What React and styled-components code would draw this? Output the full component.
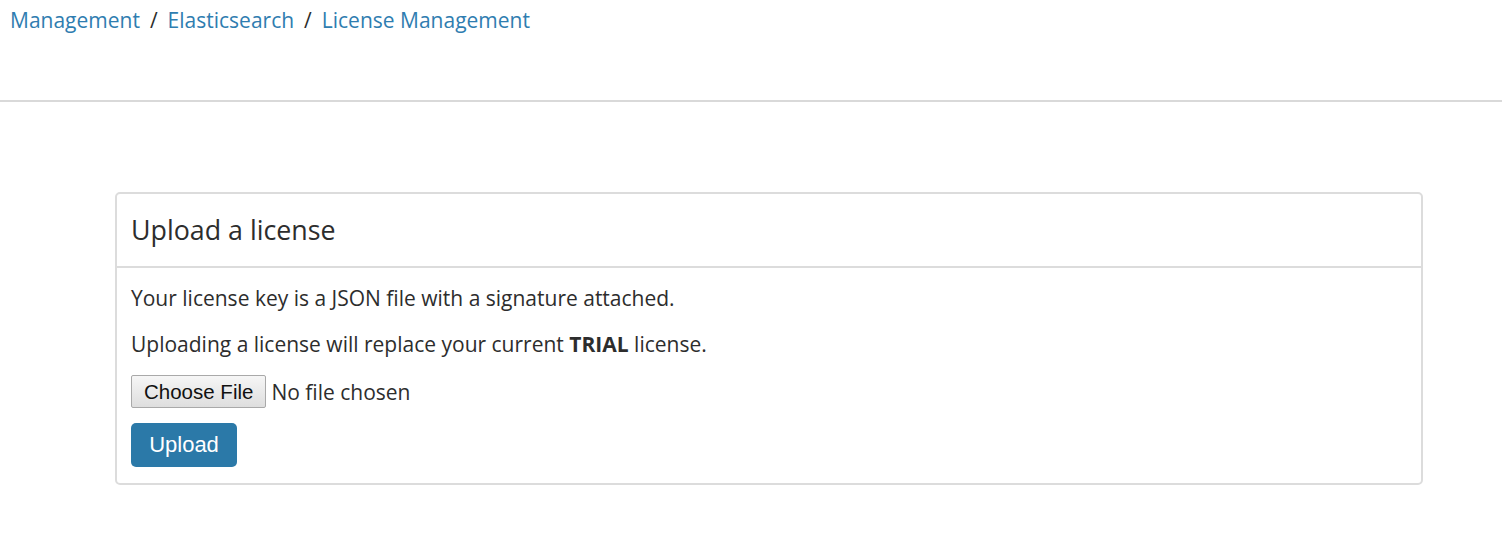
import React from 'react';
import styled, { createGlobalStyle } from 'styled-components';

const GlobalStyle = createGlobalStyle`
  body {
    margin: 0;
    background: #fff;
    font-family: "Open Sans", "Liberation Sans", sans-serif;
    color: #2d2d2d;
  }
`;

// top bar with breadcrumbs
const TopBar = styled.header`
  height: 100px;
  border-bottom: 2px solid #d9d9d9;
  box-sizing: content-box;
`;

const Crumbs = styled.nav`
  display: flex;
  align-items: center;
  padding: 5px 0 0 10px;
  font-size: 21px;
  line-height: 30px;
`;

const Crumb = styled.a`
  color: #2f7db0;
  text-decoration: none;
`;

const Divider = styled.span`
  color: #2d2d2d;
  padding: 0 10px 0 10px;
`;

const Main = styled.main`
  padding: 90px 79px 0 115px;
`;

// panel
const Panel = styled.section`
  border: 2px solid #dcdcdc;
  border-radius: 5px;
`;

const PanelHeader = styled.div`
  padding: 20px 14px;
  border-bottom: 2px solid #dcdcdc;
`;

const PanelTitle = styled.h2`
  margin: 0;
  font-size: 26.8px;
  line-height: 32px;
  font-weight: 400;
  color: #2d2d2d;
`;

const PanelBody = styled.div`
  padding: 15px 14px 16px;
  font-size: 21px;
  line-height: 30px;
`;

const Text = styled.p`
  margin: 0 0 16px;
`;

const FileRow = styled.div`
  display: flex;
  align-items: center;
  gap: 5px;
  margin-bottom: 15px;
`;

const ChooseButton = styled.button`
  height: 33px;
  padding: 0 12px;
  font-family: "Liberation Sans", Arial, sans-serif;
  font-size: 20.5px;
  color: #111;
  background: linear-gradient(#f6f6f6, #dedede);
  border: 1px solid #a9a9a9;
  border-radius: 2px;
`;

const FileName = styled.span`
  color: #2d2d2d;
`;

const PrimaryButton = styled.button`
  height: 44px;
  width: 106px;
  padding: 0;
  font-family: "Liberation Sans", Arial, sans-serif;
  font-size: 22px;
  color: #fff;
  background: #2b79a8;
  border: none;
  border-radius: 5px;
`;

export default function App() {
  return (
    <>
      <GlobalStyle />
      <TopBar>
        <Crumbs>
          <Crumb href="#">Management</Crumb>
          <Divider>/</Divider>
          <Crumb href="#">Elasticsearch</Crumb>
          <Divider>/</Divider>
          <Crumb href="#">License Management</Crumb>
        </Crumbs>
      </TopBar>
      <Main>
        <Panel>
          <PanelHeader>
            <PanelTitle>Upload a license</PanelTitle>
          </PanelHeader>
          <PanelBody>
            <Text>Your license key is a JSON file with a signature attached.</Text>
            <Text>
              Uploading a license will replace your current <b>TRIAL</b> license.
            </Text>
            <FileRow>
              <ChooseButton>Choose File</ChooseButton>
              <FileName>No file chosen</FileName>
            </FileRow>
            <PrimaryButton>Upload</PrimaryButton>
          </PanelBody>
        </Panel>
      </Main>
    </>
  );
}
